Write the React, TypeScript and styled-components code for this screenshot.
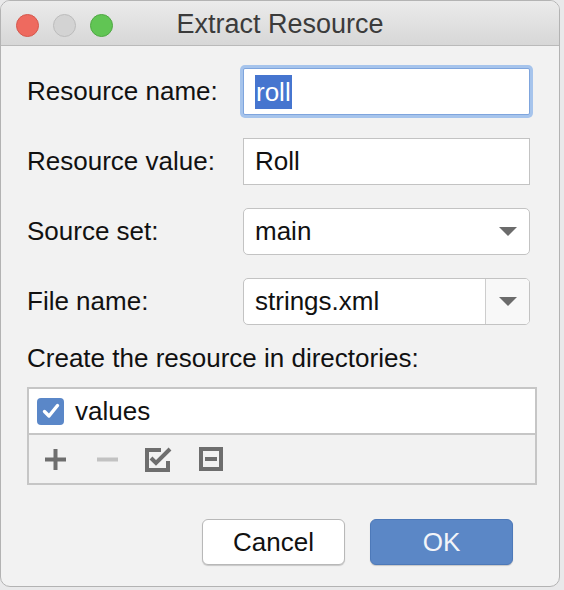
import styled, { createGlobalStyle } from "styled-components";

const GlobalStyle = createGlobalStyle`
  html, body {
    margin: 0;
    padding: 0;
    background: #e9e9ea;
  }
  * {
    box-sizing: border-box;
  }
`;

const FONT = `"Liberation Sans", Arial, sans-serif`;

export default function App() {
  return (
    <>
      <GlobalStyle />
      <Window>
        <TitleBar>
          <Lights>
            <Light $color="#ee6a5f" $border="#d5584d" />
            <Light $color="#d3d3d3" $border="#bcbcbc" />
            <Light $color="#61c554" $border="#4fa843" />
          </Lights>
          <Title>Extract Resource</Title>
          <span />
        </TitleBar>

        <Body>
          <Form>
            <Label>Resource name:</Label>
            <TextField $focused>
              <Selected>roll</Selected>
            </TextField>

            <Label>Resource value:</Label>
            <TextField>Roll</TextField>

            <Label>Source set:</Label>
            <Select>
              <FieldText>main</FieldText>
              <ArrowSlot>
                <Arrow />
              </ArrowSlot>
            </Select>

            <Label>File name:</Label>
            <Select>
              <FieldText>strings.xml</FieldText>
              <ArrowSlot $split>
                <Arrow />
              </ArrowSlot>
            </Select>
          </Form>

          <Caption>Create the resource in directories:</Caption>

          <ListBox>
            <ListRow>
              <CheckBox>
                <svg width="18" height="16" viewBox="0 0 18 16">
                  <path
                    d="M2.5 8.5 L7 13 L15.5 2.5"
                    fill="none"
                    stroke="#fff"
                    strokeWidth="3.4"
                    strokeLinecap="round"
                    strokeLinejoin="round"
                  />
                </svg>
              </CheckBox>
              <RowText>values</RowText>
            </ListRow>
            <ToolBar>
              <ToolSlot>
                <svg width="21" height="21" viewBox="0 0 21 21">
                  <path d="M10.5 0 V21 M0 10.5 H21" stroke="#6e6e6e" strokeWidth="4" />
                </svg>
              </ToolSlot>
              <ToolSlot>
                <svg width="21" height="21" viewBox="0 0 21 21">
                  <path d="M0 10.5 H21" stroke="#c2c2c2" strokeWidth="4" />
                </svg>
              </ToolSlot>
              <ToolSlot>
                <svg width="28" height="25" viewBox="0 0 28 25">
                  <path
                    d="M16 3 H2 V23 H23 V14"
                    fill="none"
                    stroke="#6e6e6e"
                    strokeWidth="4"
                  />
                  <path
                    d="M6 11 L11 16 L25 2"
                    fill="none"
                    stroke="#6e6e6e"
                    strokeWidth="4"
                  />
                </svg>
              </ToolSlot>
              <ToolSlot>
                <svg width="24" height="24" viewBox="0 0 24 24">
                  <rect x="2" y="2" width="20" height="20" fill="none" stroke="#6e6e6e" strokeWidth="4" />
                  <path d="M6 12 H18" stroke="#6e6e6e" strokeWidth="4" />
                </svg>
              </ToolSlot>
            </ToolBar>
          </ListBox>

          <Buttons>
            <Button>Cancel</Button>
            <Button $primary>OK</Button>
          </Buttons>
        </Body>
      </Window>
    </>
  );
}

const Window = styled.div`
  width: 560px;
  height: 587px;
  background: #f2f2f2;
  border: 1px solid #b3b3b3;
  border-radius: 10px;
  overflow: hidden;
  font-family: ${FONT};
  display: flex;
  flex-direction: column;
`;

const TitleBar = styled.div`
  height: 45px;
  flex: none;
  display: grid;
  grid-template-columns: 1fr auto 1fr;
  align-items: center;
  padding-top: 5px;
  background: linear-gradient(#ebebeb, #d7d7d7);
  border-bottom: 1px solid #bababa;
`;

const Lights = styled.div`
  display: flex;
  gap: 14px;
  padding-left: 15px;
`;

const Light = styled.span<{ $color: string; $border: string }>`
  width: 23px;
  height: 23px;
  border-radius: 50%;
  background: ${(p) => p.$color};
  border: 1px solid ${(p) => p.$border};
`;

const Title = styled.div`
  font-size: 27px;
  color: #3b3b3b;
  padding-bottom: 2px;
`;

const Body = styled.div`
  padding: 22px 0 0 26px;
  display: flex;
  flex-direction: column;
`;

const Form = styled.div`
  display: grid;
  grid-template-columns: 216px 287px;
  grid-auto-rows: 47px;
  row-gap: 23px;
  align-items: center;
`;

const Label = styled.div`
  font-size: 26px;
  color: #111;
`;

const TextField = styled.div<{ $focused?: boolean }>`
  height: 47px;
  background: #fff;
  border: 1px solid ${(p) => (p.$focused ? "#7fa5dd" : "#c3c3c3")};
  box-shadow: ${(p) => (p.$focused ? "0 0 0 3px #a6c4ec" : "none")};
  border-radius: ${(p) => (p.$focused ? "2px" : "0")};
  display: flex;
  align-items: center;
  padding-left: 11px;
  font-size: 26px;
  color: #111;
`;

const Selected = styled.span`
  background: #4675cf;
  color: #fff;
  line-height: 34px;
  padding: 0 1px;
`;

const Select = styled.div`
  height: 47px;
  background: #fff;
  border: 1px solid #c3c3c3;
  border-radius: 5px;
  display: flex;
  align-items: stretch;
  overflow: hidden;
`;

const FieldText = styled.div`
  flex: 1;
  display: flex;
  align-items: center;
  padding-left: 11px;
  font-size: 26px;
  color: #111;
`;

const ArrowSlot = styled.div<{ $split?: boolean }>`
  width: 44px;
  display: flex;
  align-items: center;
  justify-content: center;
  background: ${(p) => (p.$split ? "#f8f8f8" : "transparent")};
  border-left: 1px solid ${(p) => (p.$split ? "#cdcdcd" : "transparent")};
`;

const Arrow = styled.span`
  width: 0;
  height: 0;
  border-left: 9px solid transparent;
  border-right: 9px solid transparent;
  border-top: 9px solid #6b6b6b;
`;

const Caption = styled.div`
  font-size: 26px;
  color: #111;
  margin-top: 18px;
  line-height: 30px;
`;

const ListBox = styled.div`
  margin-top: 14px;
  width: 510px;
  border: 2px solid #c6c6c6;
  display: flex;
  flex-direction: column;
`;

const ListRow = styled.div`
  height: 44px;
  background: #fff;
  display: flex;
  align-items: center;
  gap: 11px;
  padding-left: 8px;
  border-bottom: 2px solid #c6c6c6;
  box-sizing: content-box;
`;

const CheckBox = styled.span`
  width: 27px;
  height: 27px;
  border-radius: 4px;
  background: #5a87c8;
  display: flex;
  align-items: center;
  justify-content: center;
`;

const RowText = styled.span`
  font-size: 26px;
  color: #111;
`;

const ToolBar = styled.div`
  height: 48px;
  display: flex;
  align-items: center;
`;

const ToolSlot = styled.span`
  width: 52px;
  display: flex;
  justify-content: center;
  align-items: center;
`;

const Buttons = styled.div`
  margin-top: 34px;
  display: flex;
  justify-content: flex-end;
  gap: 25px;
  padding-right: 46px;
`;

const Button = styled.div<{ $primary?: boolean }>`
  width: 143px;
  height: 46px;
  border-radius: 6px;
  display: flex;
  align-items: center;
  justify-content: center;
  font-size: 26px;
  background: ${(p) => (p.$primary ? "#5b87c6" : "#fff")};
  color: ${(p) => (p.$primary ? "#f3f5f9" : "#111")};
  border: 1px solid ${(p) => (p.$primary ? "#4d79b9" : "#b8b8b8")};
  box-shadow: 0 1px 1px rgba(0, 0, 0, 0.18);
`;
